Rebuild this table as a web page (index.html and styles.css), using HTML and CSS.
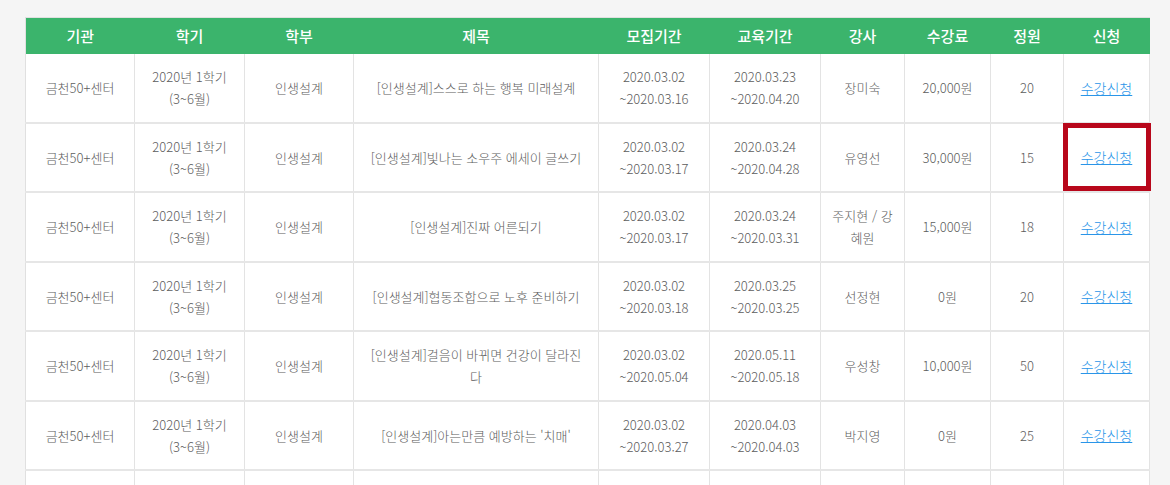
FILE: index.html
```html
<!DOCTYPE html>
<html lang="ko">
<head>
    <meta charset="UTF-8">
    <meta name="viewport" content="width=device-width, initial-scale=1.0">
    <title>강좌 목록</title>
    <link rel="stylesheet" href="styles.css">
</head>
<body>

    <div class="wrap">
        <table class="courseTable">
            <colgroup>
                <col style="width:109px">
                <col style="width:110px">
                <col style="width:109px">
                <col style="width:245px">
                <col style="width:111px">
                <col style="width:111px">
                <col style="width:84px">
                <col style="width:86px">
                <col style="width:73px">
                <col style="width:86px">
            </colgroup>
            <thead>
                <tr>
                    <th>기관</th>
                    <th>학기</th>
                    <th>학부</th>
                    <th>제목</th>
                    <th>모집기간</th>
                    <th>교육기간</th>
                    <th>강사</th>
                    <th>수강료</th>
                    <th>정원</th>
                    <th>신청</th>
                </tr>
            </thead>
            <tbody>
                <tr>
                    <td>금천50+센터</td>
                    <td>2020년 1학기<br>(3~6월)</td>
                    <td>인생설계</td>
                    <td class="title">[인생설계]스스로 하는 행복 미래설계</td>
                    <td>2020.03.02<br>~2020.03.16</td>
                    <td>2020.03.23<br>~2020.04.20</td>
                    <td>장미숙</td>
                    <td>20,000원</td>
                    <td>20</td>
                    <td><a href="#">수강신청</a></td>
                </tr>
                <tr>
                    <td>금천50+센터</td>
                    <td>2020년 1학기<br>(3~6월)</td>
                    <td>인생설계</td>
                    <td class="title">[인생설계]빛나는 소우주 에세이 글쓰기</td>
                    <td>2020.03.02<br>~2020.03.17</td>
                    <td>2020.03.24<br>~2020.04.28</td>
                    <td>유영선</td>
                    <td>30,000원</td>
                    <td>15</td>
                    <td class="marked"><a href="#">수강신청</a><span class="mark"></span></td>
                </tr>
                <tr>
                    <td>금천50+센터</td>
                    <td>2020년 1학기<br>(3~6월)</td>
                    <td>인생설계</td>
                    <td class="title">[인생설계]진짜 어른되기</td>
                    <td>2020.03.02<br>~2020.03.17</td>
                    <td>2020.03.24<br>~2020.03.31</td>
                    <td>주지현 / 강혜원</td>
                    <td>15,000원</td>
                    <td>18</td>
                    <td><a href="#">수강신청</a></td>
                </tr>
                <tr>
                    <td>금천50+센터</td>
                    <td>2020년 1학기<br>(3~6월)</td>
                    <td>인생설계</td>
                    <td class="title">[인생설계]협동조합으로 노후 준비하기</td>
                    <td>2020.03.02<br>~2020.03.18</td>
                    <td>2020.03.25<br>~2020.03.25</td>
                    <td>선정현</td>
                    <td>0원</td>
                    <td>20</td>
                    <td><a href="#">수강신청</a></td>
                </tr>
                <tr>
                    <td>금천50+센터</td>
                    <td>2020년 1학기<br>(3~6월)</td>
                    <td>인생설계</td>
                    <td class="title">[인생설계]걸음이 바뀌면 건강이 달라진다</td>
                    <td>2020.03.02<br>~2020.05.04</td>
                    <td>2020.05.11<br>~2020.05.18</td>
                    <td>우성창</td>
                    <td>10,000원</td>
                    <td>50</td>
                    <td><a href="#">수강신청</a></td>
                </tr>
                <tr>
                    <td>금천50+센터</td>
                    <td>2020년 1학기<br>(3~6월)</td>
                    <td>인생설계</td>
                    <td class="title">[인생설계]아는만큼 예방하는 '치매'</td>
                    <td>2020.03.02<br>~2020.03.27</td>
                    <td>2020.04.03<br>~2020.04.03</td>
                    <td>박지영</td>
                    <td>0원</td>
                    <td>25</td>
                    <td><a href="#">수강신청</a></td>
                </tr>
                <tr class="emptyRow">
                    <td></td>
                    <td></td>
                    <td></td>
                    <td></td>
                    <td></td>
                    <td></td>
                    <td></td>
                    <td></td>
                    <td></td>
                    <td></td>
                </tr>
            </tbody>
        </table>
    </div>

</body>
</html>
```

FILE: styles.css
```css
body {
    margin: 0;
    background-color: #f5f5f5;
    font-family: "Noto Sans CJK KR", "Noto Sans", sans-serif;
    color: #5c5c5c;
}
.wrap {
    padding: 17px 0 0 25px;
}
.courseTable {
    width: 1124px;
    table-layout: fixed;
    border-collapse: collapse;
    background: white;
    border-top: 1px solid #e0e0e0;
    border-left: 1px solid #e0e0e0;
}
.courseTable th {
    background-color: #3bb46c;
    color: white;
    font-size: 15px;
    font-weight: 500;
    line-height: 22px;
    padding: 7px 4px;
    text-align: center;
}
.courseTable td {
    font-size: 13px;
    font-weight: 300;
    line-height: 22px;
    padding: 12px 6px 11.5px;
    text-align: center;
    border-right: 1px solid #e3e3e3;
    border-bottom: 2px solid #e6e6e6;
}
.courseTable td.title {
    padding-left: 12px;
    padding-right: 12px;
}
.courseTable .emptyRow td {
    height: 44px;
}
.courseTable a {
    color: #2a95e8;
    font-size: 14px;
    text-decoration: underline;
}
.marked {
    position: relative;
}
.mark {
    position: absolute;
    left: -1px;
    top: -1px;
    right: -2px;
    bottom: 0;
    border: 5px solid #b8071b;
}
```
